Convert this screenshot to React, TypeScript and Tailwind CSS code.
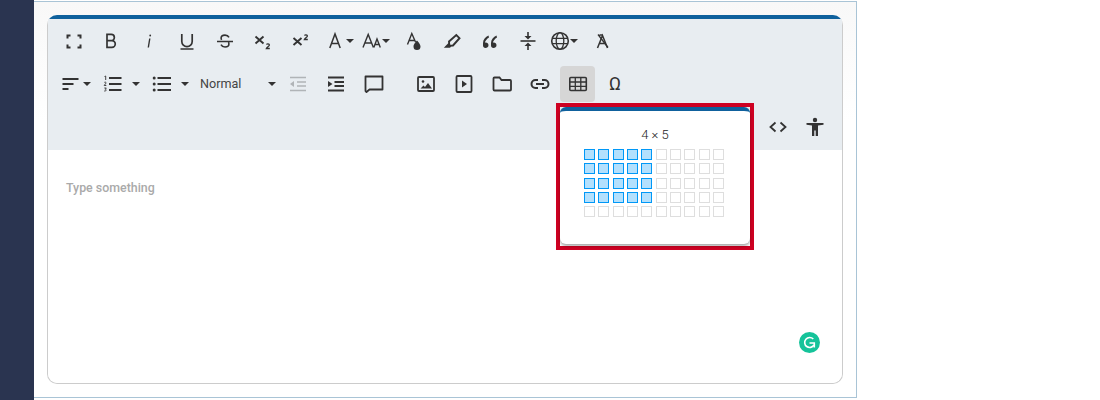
import React from "react";

const S = ({ children, fill }: { children: React.ReactNode; fill?: boolean }) => (
  <svg
    viewBox="0 0 24 24"
    className="w-6 h-6 shrink-0"
    fill={fill ? "#333" : "none"}
    stroke={fill ? "none" : "#333"}
    strokeWidth={1.7}
  >
    {children}
  </svg>
);

const Caret = ({ className = "" }: { className?: string }) => (
  <div className={`w-0 h-0 border-x-4 border-t-4 border-x-transparent border-t-[#333] ${className}`} />
);

const row1: React.ReactNode[] = [
  <S><path strokeWidth={2} d="M6.5 9.5V6.5h3M16.5 6.5h3v3M19.5 15.5v3h-3M9.5 18.5h-3v-3" /></S>,
  <S><path strokeWidth={1.7} d="M8 5.4h4.2a3.1 3.1 0 0 1 0 6.3H8zm0 6.3h4.9a3.3 3.3 0 0 1 0 6.7H8z" /></S>,
  <S><path strokeWidth={1.4} d="M12.8 9.5 11.3 18.5" /><circle cx="13.2" cy="6.5" r="0.9" fill="#333" stroke="none" /></S>,
  <S><path d="M6.8 5v7.5a5.2 5.2 0 0 0 10.4 0V5M5.5 20h13" /></S>,
  <S><path strokeWidth={1.6} d="M16 8.3c-.7-1.4-2.2-2.2-4-2.2-2.3 0-3.9 1.2-3.9 3 0 .7.2 1.2.5 1.7M8 15.7c.7 1.4 2.2 2.3 4 2.3 2.3 0 3.9-1.2 3.9-3 0-.7-.2-1.3-.5-1.7M4 12.5h16" /></S>,
  <S><path strokeWidth={1.9} d="M4.500 7.500 12.500 14.500M12.500 7.500 4.500 14.500" /><path strokeWidth={1.3} d="M15.600 15.600c.2-1 2.800-1.200 2.800.3 0 1.200-2.300 2.200-3 3.600h3.400" /></S>,
  <S><path strokeWidth={1.9} d="M4.500 9 12.500 16M12.500 9 4.500 16" /><path strokeWidth={1.3} d="M15.600 6.600c.2-1 2.800-1.200 2.800.3 0 1.200-2.300 2.200-3 3.600h3.400" /></S>,
  <div className="flex items-center">
    <S><path strokeWidth={1.5} d="M6.800 19 12 5l5.200 14M8.500 14.500h7" /></S>
    <Caret className="-ml-[1px]" />
  </div>,
  <div className="flex items-center -ml-[2px]">
    <S><path strokeWidth={1.4} d="M3 18.500 8.200 5.500l5.200 13M4.800 14h6.800M13.800 18.500 17 10l3.300 8.500M15 15.500h4.200" /></S>
    <Caret className="-ml-[2px]" />
  </div>,
  <S>
    <path strokeWidth={1.4} d="M5.500 15.500 9.800 4.500l3.700 8.500M7 11.500h5.300" />
    <path fill="#333" stroke="none" d="M15 11.500s-3.500 3.500-3.500 6a3.500 3.500 0 0 0 7 0c0-2.500-3.500-6-3.500-6z" />
  </S>,
  <S>
    <path strokeWidth={1.9} d="M9 12.500 16.300 6l3.200 3.200-6.500 7.300-3.700.2z" />
    <path fill="#333" stroke="none" d="M8.500 14l2.800 3-1.200 1.700H3.800z" />
  </S>,
  <S fill>
    <path d="M10.500 6.500C7.500 8 5 10.500 5 14v2.500C5 18 6 19 7.500 19S10.500 18 10.500 16.300 9.300 13.600 7.800 13.600c-.4 0-.7.1-.9.2.3-2.200 2-4 4.100-5.400zM18.500 6.500C15.500 8 13 10.500 13 14v2.500c0 1.500 1 2.500 2.500 2.500s3-1 3-2.700-1.200-2.700-2.700-2.700c-.4 0-.7.1-.9.2.3-2.200 2-4 4.100-5.400z" />
  </S>,
  <S>
    <path strokeWidth={1.6} d="M4.500 12h15" />
    <path fill="#333" stroke="none" d="M11.200 3h1.600v4h2.700L12 10.500 8.500 7h2.700zM12 13.500 15.500 17h-2.700v4h-1.600v-4H8.500z" />
  </S>,
  <div className="flex items-center -ml-[6px]">
    <S>
      <circle cx="12" cy="12" r="8.300" strokeWidth={1.6} />
      <ellipse cx="12" cy="12" rx="3.800" ry="8.300" strokeWidth={1.3} />
      <path strokeWidth={1.3} d="M4 9.300h16M4 14.700h16" />
    </S>
    <Caret className="-ml-[2px]" />
  </div>,
  <S>
    <path strokeWidth={1.5} d="M6.500 19 11.500 6.500l5 12.500M8.500 14.500h6" />
    <path strokeWidth={1.3} d="M8.500 6h3M17 18.500 7 5.500" />
  </S>,
];

function App() {
  const cells: boolean[] = [];
  for (let r = 0; r < 5; r++) for (let c = 0; c < 10; c++) cells.push(r < 4 && c < 5);

  return (
    <div className="flex h-[400px] w-[1100px] bg-white font-['Roboto',sans-serif] overflow-hidden">
      <div className="w-[34px] shrink-0 bg-[#2a3450]" />
      <div className="w-[823px] h-[397px] mt-px border border-[#a9c4d6] border-l-0 bg-gradient-to-b from-[#f8f8f8] via-white via-[30%] to-white pt-[13px] pl-[13px]">
        <div className="relative w-[796px] h-[369px] rounded-[10px] border border-[#cccccc] border-t-4 border-t-[#0f619d] bg-white flex flex-col">
          <div className="h-[131px] bg-[#e8edf1] flex flex-col shrink-0">
            {/* row 1 */}
            <div className="h-[43px] flex items-center pl-[6.500px]">
              {row1.map((ic, i) => (
                <div key={i} className="w-[37.860px] flex justify-center items-center shrink-0">
                  {ic}
                </div>
              ))}
            </div>
            {/* row 2 */}
            <div className="h-[43px] flex items-center pl-[11px]">
              <div className="w-[42px] flex items-center">
                <S><path strokeWidth={1.800} d="M3.500 7h16M3.500 12h11M3.500 17h6" /></S>
                <Caret />
              </div>
              <div className="w-[50px] flex items-center">
                <S>
                  <path strokeWidth={1.800} d="M8 6h12.500M8 12h12.500M8 18h12.500" />
                  <path strokeWidth={0.900} d="M3.500 4.500 4.700 4v4M3.300 10.500c.5-.7 2-.5 1.700.600L3.200 13.500h2.100M3.300 16h2l-1 1.200c1 0 1.200 1.800-.2 1.800H3.200" />
                </S>
                <Caret className="ml-[7px]" />
              </div>
              <div className="w-[50px] flex items-center ml-[-1px]">
                <S>
                  <path strokeWidth={1.800} d="M7.500 6h13.500M7.500 12h13.500M7.500 18h13.500" />
                  <circle cx="4.200" cy="6" r="1.500" fill="#333" stroke="none" />
                  <circle cx="4.200" cy="12" r="1.500" fill="#333" stroke="none" />
                  <circle cx="4.200" cy="18" r="1.500" fill="#333" stroke="none" />
                </S>
                <Caret className="ml-[7px]" />
              </div>
              <div className="w-[80px] -ml-[1px] flex items-center pr-[3px] justify-between text-[#444] pl-[1px]">
                <span className="leading-none text-[12.600px] pt-[2px]">Normal</span>
                <Caret />
              </div>
              <div className="w-[38px] flex justify-center opacity-30">
                <S><path strokeWidth={1.700} d="M4 5.500h16M11 10h9M11 14h9M4 18.500h16" /><path fill="#333" stroke="none" d="M8 9v6l-4-3z" /></S>
              </div>
              <div className="w-[38px] flex justify-center">
                <S><path strokeWidth={1.900} d="M4 5.500h16M10.500 10h9.500M10.500 14h9.500M4 18.500h16" /><path fill="#333" stroke="none" d="M4 9v6l4.500-3z" /></S>
              </div>
              <div className="w-[38px] flex justify-center">
                <S><path strokeWidth={1.800} d="M3.500 4.500h17v13H7.500l-3 2.500-1-1z" strokeLinejoin="round" /></S>
              </div>
              <div className="w-[14px]" />
              <div className="w-[38px] flex justify-center">
                <S>
                  <rect x="4" y="5" width="16" height="14" rx="1" strokeWidth={1.800} />
                  <circle cx="9" cy="9.500" r="1.300" fill="#333" stroke="none" />
                  <path fill="#333" stroke="none" d="M6.500 16.500l3-3 1.500 1.500 3-4 4 5.500z" />
                </S>
              </div>
              <div className="w-[38px] flex justify-center">
                <S>
                  <rect x="4.500" y="4" width="15" height="16" rx="1" strokeWidth={1.800} />
                  <path fill="#333" stroke="none" d="M10 8.500v7l5-3.500z" />
                </S>
              </div>
              <div className="w-[38px] flex justify-center">
                <S><path strokeWidth={1.800} d="M3.500 6.500c0-.5.300-1 1-1h5l2 2.500h8.500c.6 0 1 .4 1 1v8.500c0 .6-.4 1-1 1h-15.500c-.6 0-1-.4-1-1z" /></S>
              </div>
              <div className="w-[38px] flex justify-center">
                <S><path strokeWidth={2} d="M10 8H7.500a4 4 0 0 0 0 8H10M14 8h2.500a4 4 0 0 1 0 8H14M8 12h8" /></S>
              </div>
              <div className="w-[35px] h-[36px] rounded-[4px] bg-[#d6d6d6] flex justify-center items-center ml-[1px]">
                <S>
                  <rect x="3.800" y="5.500" width="16.500" height="13" rx="1" strokeWidth={1.600} />
                  <path strokeWidth={1.300} d="M3.800 10h16.500M3.800 14.300h16.500M9.300 5.500v13M14.800 5.500v13" />
                </S>
              </div>
              <div className="w-[40px] flex justify-center text-[18px] font-normal text-[#333] leading-none">Ω</div>
            </div>
            {/* row 3 */}
            <div className="h-[43px] flex items-center justify-end pr-[9px]">
              <div className="w-[37px] flex justify-center">
                <S><path strokeWidth={1.800} d="M9.500 7.500 4.500 12l5 4.500M14.500 7.500l5 4.500-5 4.500" /></S>
              </div>
              <div className="w-[37px] flex justify-center">
                <S fill>
                  <circle cx="12" cy="5" r="2.200" />
                  <path d="M3.500 8h17v1.800L15 10.500V21h-2.300v-5.500h-1.400V21H9V10.500l-5.500-.7z" />
                </S>
              </div>
            </div>
          </div>

          <div className="flex-1 relative pl-[18px] pt-[30px] rounded-b-[10px] bg-white">
            <span className="text-[12.400px] font-medium text-[#aaaaaa] leading-[15px] block">Type something</span>
            <div className="absolute left-[751px] top-[182px] w-[21px] h-[21px] rounded-full bg-[#15c39a] flex items-center justify-center">
              <svg viewBox="0 0 21 21" className="w-[21px] h-[21px]" fill="none" stroke="#fff" strokeWidth={1.600}>
                <path d="M14.300 7a5 5 0 1 0 .7 6" />
                <path d="M10.500 11h4.800v4.500" />
              </svg>
            </div>
          </div>

          {/* table popup with highlight frame */}
          <div className="absolute left-[508px] top-[84px] w-[198px] h-[147px] border-[4.500px] border-[#ce0022] bg-transparent">
            <div className="w-full h-full pb-[2px]">
              <div className="h-full rounded-[6px] bg-white border-t-4 border-t-[#0f619d] shadow-[0_2px_3px_rgba(0,0,0,0.35)] flex flex-col items-center">
                <div className="text-[13px] font-light text-[#222] mt-[16px] leading-[16px] h-[22px]">4 × 5</div>
                <div className="grid grid-cols-[repeat(10,11px)] gap-[3.330px] -ml-[2px]">
                  {cells.map((on, i) => (
                    <div
                      key={i}
                      className={on ? "w-[11px] h-[11px] border border-[#0098f7] bg-[#b3e0fd]" : "w-[11px] h-[11px] border border-[#dedede] bg-white"}
                    />
                  ))}
                </div>
              </div>
            </div>
          </div>
        </div>
      </div>
    </div>
  );
}

export default App;
